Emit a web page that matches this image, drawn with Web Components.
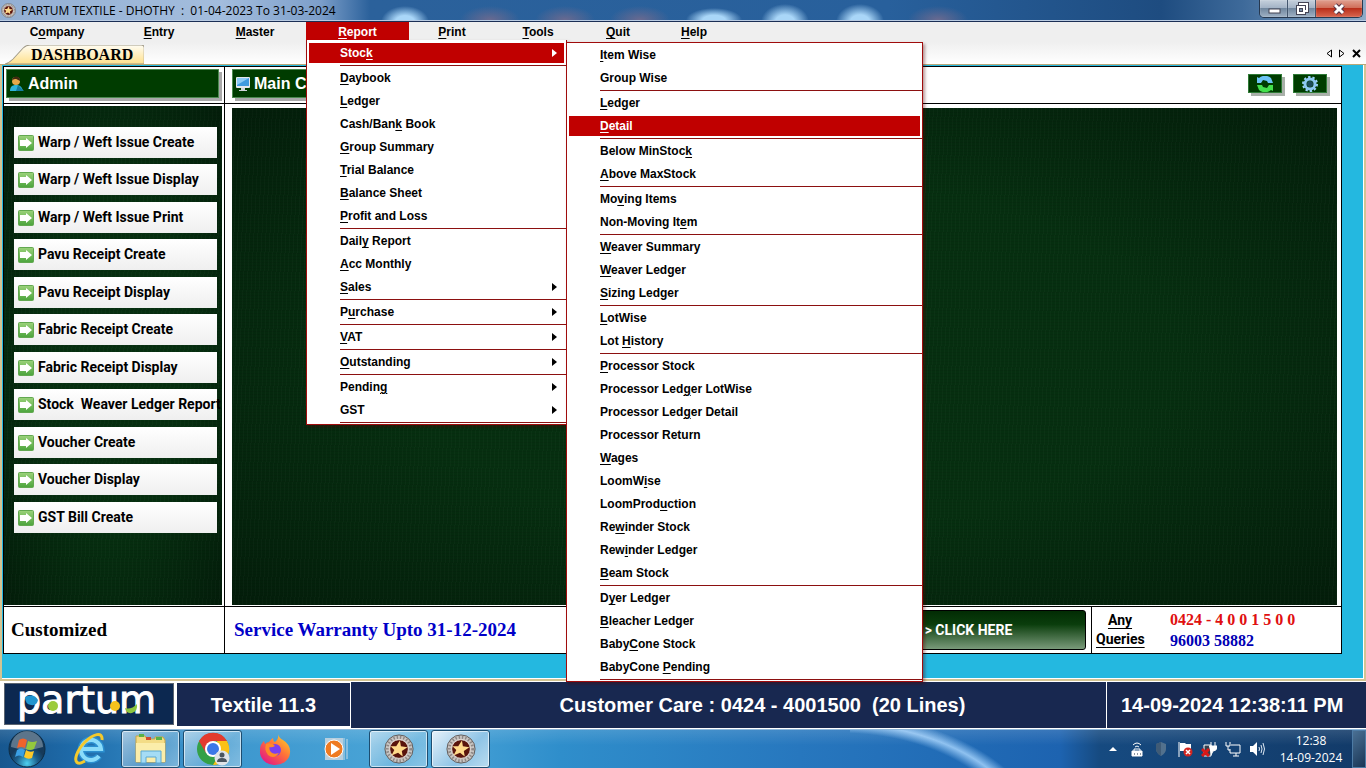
<!DOCTYPE html>
<html lang="en">
<head>
<meta charset="utf-8">
<title>PARTUM TEXTILE - DHOTHY</title>
<style>
body {
  margin: 0;
  min-height: 100vh;
  display: flex;
  flex-direction: column;
  background: #fff;
  color: #000;
  font-family: "Liberation Sans", Arial, sans-serif;
  overflow: hidden;
}
main {
  flex: 1;
  display: flex;
  flex-direction: column;
}
</style>
</head>
<body>
<title-bar>PARTUM TEXTILE - DHOTHY  :  01-04-2023 To 31-03-2024</title-bar>
<menu-bar></menu-bar>
<main>
  <tab-strip>DASHBOARD</tab-strip>
  <dash-board>
    <green-caption slot="user">
      <svg slot="icon" width="16" height="16" viewBox="0 0 16 16"><path d="M1 15c0-4 2-6 6-6s6 2 7 6z" fill="#2fb4d8"/><path d="M9 9l6 6H7z" fill="#157da0"/><circle cx="7" cy="5" r="4" fill="#e8a84a"/><path d="M3 5c0-6 9-6 8 0-2-1-3-2-4-2s-3 0-4 2z" fill="#402a12"/></svg>
      Admin
    </green-caption>
    <side-link slot="links">Warp / Weft Issue Create</side-link>
    <side-link slot="links">Warp / Weft Issue Display</side-link>
    <side-link slot="links">Warp / Weft Issue Print</side-link>
    <side-link slot="links">Pavu Receipt Create</side-link>
    <side-link slot="links">Pavu Receipt Display</side-link>
    <side-link slot="links">Fabric Receipt Create</side-link>
    <side-link slot="links">Fabric Receipt Display</side-link>
    <side-link slot="links">Stock  Weaver Ledger Report</side-link>
    <side-link slot="links">Voucher Create</side-link>
    <side-link slot="links">Voucher Display</side-link>
    <side-link slot="links">GST Bill Create</side-link>
    <green-caption slot="head">
      <svg slot="icon" width="16" height="16" viewBox="0 0 16 16"><rect x="1" y="1" width="14" height="11" rx="1" fill="#e4e8ec"/><rect x="2" y="2" width="12" height="8" fill="#3f9be0"/><path d="M2 2h12L2 9z" fill="#8ccbf5"/><path d="M6 12h4v2h2v1H4v-1h2z" fill="#cfd5da"/></svg>
      Main C
    </green-caption>
    <tool-button slot="tools" label="Refresh">
      <svg width="18" height="16" viewBox="0 0 18 16"><path d="M1 7V1l2 1c3-3 9-3 12 0l2 5h-5l-1-2-4-1-2 3z" fill="#6cc3f5"/><path d="M17 9v6l-2-1c-3 3-9 3-12 0L1 9h5l1 2 4 1 2-3z" fill="#43e04c"/></svg>
    </tool-button>
    <tool-button slot="tools" label="Settings">
      <svg width="18" height="16" viewBox="0 0 18 16"><circle cx="9" cy="8" r="7" fill="none" stroke="#9fd4fa" stroke-width="2" stroke-dasharray="2.4 2"/><circle cx="9" cy="8" r="5" fill="none" stroke="#8cc8f4" stroke-width="3"/><circle cx="9" cy="8" r="3" fill="#1d4d5c"/></svg>
    </tool-button>
  </dash-board>
</main>
<status-bar></status-bar>
<task-bar></task-bar>

<script>
const redMenu = '#c00000';

/**
 * Register a custom element whose shadow root is filled from markup
 * @param {string} name
 * @param {string} html
 * @param {Function} setup
 */
function register(name, html, setup) {
  const template = document.createElement('template');
  template.innerHTML = html;

  customElements.define(name, class extends HTMLElement {
    constructor() {
      super();
      this.attachShadow({ mode: 'open' });
      this.shadowRoot.appendChild(template.content.cloneNode(true));
    }

    connectedCallback() {
      if (setup) {
        setup(this, this.shadowRoot);
      }
    }
  });
}

// '&' stands before the mnemonic letter of a caption
function caption(text) {
  return text.replace(/&(.)/, '<u>$1</u>');
}

const badge = `
<svg viewBox="0 0 32 32">
  <circle cx="16" cy="16" r="15" fill="#c9c5c2" stroke="#5b5452"/>
  <circle cx="16" cy="16" r="12.500" fill="none" stroke="#8d8785" stroke-width="3" stroke-dasharray="1.500 2"/>
  <circle cx="16" cy="16" r="10" fill="#5a140c" stroke="#e9e2dc"/>
  <path d="M17 7l1 6 7 1-6 4 1 6-5-4-7 3 3-6-4-4h6z" fill="#ffd98a"/>
</svg>`;

register('title-bar', `
<style>
:host {
  display: flex;
  height: 21px;
  border-bottom: 1px solid #1b2f55;
  box-shadow: inset 0 -1px #b9cbe2;
  background:
    radial-gradient(ellipse 24px 16px at 405px 22px, #a9d6f8 40%, transparent),
    radial-gradient(ellipse 28px 12px at 714px 20px, #a9d6f8 40%, transparent),
    radial-gradient(ellipse 24px 18px at 785px 22px, #a9d6f8 40%, transparent),
    radial-gradient(ellipse 24px 18px at 860px 22px, #a9d6f8 40%, transparent),
    radial-gradient(ellipse 30px 14px at 490px 20px, #6a6a90, transparent),
    radial-gradient(ellipse 30px 14px at 565px 20px, #6a6a90, transparent),
    radial-gradient(ellipse 30px 14px at 640px 20px, #6a6a90, transparent),
    radial-gradient(ellipse 30px 14px at 938px 20px, #6a6a90, transparent),
    linear-gradient(90deg, #93afd3, #a3bddd 220px, #7d9fca 320px, #2b619b 370px, #28609c 65%, #1e4c80 85%, #3e6a9a 91%, #90abc8);
}
.icon {
  width: 15px;
  height: 15px;
  margin: 3px 5px 0 1px;
}
h1 {
  flex: 1;
  margin: 0;
  font: 12px/21px "Open Sans", "Noto Sans", sans-serif;
  white-space: pre;
}
.buttons {
  display: flex;
  height: 17px;
  margin-right: 3px;
  border: 1px solid #26384f;
  border-top: 0;
  border-radius: 0 0 5px 5px;
  overflow: hidden;
}
button {
  width: 28px;
  padding: 0;
  border: 0;
  border-right: 1px solid #43566e;
  background: linear-gradient(#c5d0dc, #a0b0c4 50%, #71879f 50%, #9fb1c4);
  box-shadow: inset 0 0 1px #fff;
}
.close {
  width: 46px;
  border: 0;
  background: linear-gradient(#e0a090, #cf6a55 50%, #b92f1b 50%, #d8664f);
}
svg { display: block; margin: auto; }
</style>
<div class="icon">${badge}</div>
<h1><slot></slot></h1>
<div class="buttons">
  <button aria-label="Minimize"><svg width="14" height="12"><rect x="2" y="6" width="11" height="4" fill="#fff" stroke="#445"/></svg></button>
  <button aria-label="Restore"><svg width="14" height="13" fill="none"><path d="M5 3V2h7v7h-2M3 5h6v6H3z" stroke="#445" stroke-width="4"/><path d="M5 3V2h7v7h-2M3 5h6v6H3z" stroke="#fff" stroke-width="2"/></svg></button>
  <button class="close" aria-label="Close"><svg width="14" height="12" fill="none"><path d="M3 2l8 8M11 2l-8 8" stroke="#534" stroke-width="5"/><path d="M3 2l8 8M11 2l-8 8" stroke="#fff" stroke-width="3"/></svg></button>
</div>`);

register('drop-menu', `
<style>
:host {
  display: block;
  position: absolute;
  z-index: 10;
  box-sizing: border-box;
  background: #fff;
  border: 1px solid #a00c0c;
  box-shadow: 2px 2px 3px rgba(80, 0, 0, .4);
  padding-top: 1px;
}
ul {
  margin: 0;
  padding: 0;
  list-style: none;
}
li {
  display: flow-root;
  position: relative;
}
ul { display: flow-root; }
.line {
  height: 1px;
  margin: 0 0 1px 33px;
  background: #8c1010;
}
button {
  display: flex;
  align-items: center;
  justify-content: space-between;
  box-sizing: border-box;
  width: calc(100% - 4px);
  height: 20px;
  margin: 1px 2px 2px;
  padding: 0 7px 0 31px;
  border: 0;
  background: none;
  color: #000;
  font: bold 12px/20px "Liberation Sans", Arial, sans-serif;
  text-align: left;
}
button.active {
  background: ${redMenu};
  color: #fff;
}
u { text-underline-offset: 2px; }
drop-menu {
  left: 100%;
  top: 0;
  width: 357px;
}
</style>
<ul></ul>`, (host, root) => {
  const list = root.querySelector('ul');
  for (const item of host.items || []) {
    const li = document.createElement('li');
    if (item === '-') {
      li.className = 'line';
    } else {
      const [text, sub, active] = [].concat(item);
      const arrow = sub ? '<svg width="5" height="8" fill="currentColor"><path d="M0 0l5 4-5 4z"/></svg>' : '';
      li.innerHTML = `<button><span>${caption(text)}</span>${arrow}</button>`;
      li.firstChild.classList.toggle('active', !!active);
      if (Array.isArray(sub)) {
        const menu = document.createElement('drop-menu');
        menu.items = sub;
        li.appendChild(menu);
      }
    }
    list.appendChild(li);
  }
});

const stockItems = [
  '&Item Wise', 'Group Wise', '-',
  '&Ledger', ['&Detail', false, true], '-',
  'Below MinStoc&k', '&Above MaxStock', '-',
  'Mo&ving Items', 'Non-Moving It&em', '-',
  '&Weaver Summary', '&Weaver Ledger', '&Sizing Ledger', '-',
  '&LotWise', 'Lot &History', '-',
  '&Processor Stock', 'Processor Led&ger LotWise', 'Processor Led&ger Detail', 'Processor Return',
  '&Wages', 'LoomW&ise', 'LoomProd&uction', 'Re&winder Stock', 'Rew&inder Ledger', '&Beam Stock', '-',
  'D&yer Ledger', '&Bleacher Ledger', 'Baby&Cone Stock', 'BabyCone &Pending', '-',
];

const reportItems = [
  ['Stoc&k', stockItems, true], '-',
  '&Daybook', '&Ledger', 'Cash/Ban&k Book', '&Group Summary', '&Trial Balance', '&Balance Sheet', '&Profit and Loss', '-',
  'Dail&y Report', '&Acc Monthly', ['&Sales', true], '-',
  ['P&urchase', true], '-',
  ['&VAT', true], '-',
  ['&Outstanding', true], '-',
  ['Pendin&g', true], ['GST', true], '-',
];

// caption and button width of each menu
const menus = [
  ['C&ompany', 114], ['&Entry', 90], ['&Master', 102], ['&Report', 103],
  ['&Print', 86], ['&Tools', 86], ['&Quit', 74], ['&Help', 78],
];

register('menu-bar', `
<style>
:host {
  display: flex;
  height: 20px;
  background: #efefef;
}
div { position: relative; }
button {
  display: block;
  width: 100%;
  height: 18px;
  padding: 1px 0 0;
  border: 0;
  background: none;
  color: #000;
  font: bold 12px/18px "Liberation Sans", Arial, sans-serif;
}
.open {
  background: ${redMenu};
  color: #fff;
}
u { text-underline-offset: 2px; }
drop-menu {
  top: 18px;
  left: 0;
  width: 261px;
  border-top: 0;
  padding-top: 2px;
}
</style>`, (host, root) => {
  for (const [name, width] of menus) {
    const box = document.createElement('div');
    box.style.width = `${width}px`;
    box.innerHTML = `<button>${caption(name)}</button>`;
    if (name === '&Report') {
      box.firstChild.className = 'open';
      const menu = document.createElement('drop-menu');
      menu.items = reportItems;
      box.appendChild(menu);
    }
    root.appendChild(box);
  }
});

register('tab-strip', `
<style>
:host {
  display: flex;
  align-items: flex-end;
  height: 22px;
  background: linear-gradient(#efefef, #fff);
  border-bottom: 1px solid #b9a878;
}
.tab {
  position: relative;
  margin-left: 5px;
  padding: 0 11px 0 26px;
  border: 0;
  background: none;
  font: bold 16px/19px "Liberation Serif", "Times New Roman", serif;
  color: #000;
}
.tab svg {
  position: absolute;
  inset: 0;
  width: 100%;
  height: 100%;
}
.tab span { position: relative; }
nav {
  display: flex;
  gap: 7px;
  margin: 0 5px 6px auto;
}
nav button {
  display: block;
  padding: 0;
  border: 0;
  background: none;
}
nav svg { display: block; }
</style>
<button class="tab" role="tab">
  <svg viewBox="0 0 138 19" preserveAspectRatio="none">
    <defs><linearGradient id="g" x2="0" y2="1"><stop stop-color="#fffdf3"/><stop offset="1" stop-color="#ffe08c"/></linearGradient></defs>
    <path d="M0 19Q4 18 8 14L18 3Q21 0 25 0H135Q138 0 138 3V19z" fill="url(#g)" stroke="#a09a88"/>
  </svg>
  <span><slot></slot></span>
</button>
<nav>
  <button aria-label="Previous tab"><svg width="6" height="9" fill="none" stroke="#000"><path d="M5.500 1v7L1 4.500z"/></svg></button>
  <button aria-label="Next tab"><svg width="6" height="9" fill="none" stroke="#000"><path d="M.500 1v7L5 4.500z"/></svg></button>
  <button aria-label="Close tab"><svg width="9" height="9" fill="none" stroke="#000" stroke-width="2"><path d="M1 1l7 7M8 1L1 8"/></svg></button>
</nav>`);

register('green-caption', `
<style>
:host {
  display: flex;
  align-items: center;
  gap: 3px;
  box-sizing: border-box;
  height: 29px;
  padding-left: 2px;
  background: #003c00;
  border: 1px solid #4c8a50;
  box-shadow: 3px 3px #a9a9a9;
  color: #fff;
  font-size: 16px;
  font-weight: bold;
}
</style>
<slot name="icon"></slot>
<div><slot></slot></div>`);

register('side-link', `
<style>
:host {
  display: block;
  margin-bottom: 6px;
}
:host(:nth-of-type(even)) { margin-bottom: 7px; }
button {
  display: flex;
  align-items: center;
  gap: 4px;
  width: 100%;
  height: 31px;
  padding: 0 0 0 4px;
  border: 0;
  background: linear-gradient(#fff, #efefef);
  color: #000;
  font: bold 14px/33px Roboto, "Liberation Sans", sans-serif;
  white-space: pre;
}
svg { flex: none; }
</style>
<button>
  <svg width="16" height="16" viewBox="0 0 16 16"><defs><linearGradient id="a" x2="0" y2="1"><stop stop-color="#9bd27a"/><stop offset="1" stop-color="#4ba43c"/></linearGradient></defs><rect x=".5" y=".5" width="15" height="15" rx="1" fill="url(#a)" stroke="#62a850"/><path d="M2 5h6V3l6 5-6 5v-2H2z" fill="#fff"/></svg>
  <slot></slot>
</button>`);

register('tool-button', `
<style>
:host { display: block; }
button {
  display: flex;
  align-items: center;
  justify-content: center;
  width: 34px;
  height: 19px;
  padding: 0;
  border: 1px solid #2f7a36;
  background: #003c00;
  box-shadow: 3px 3px #a9b0a9;
}
</style>
<button><slot></slot></button>`, (host, root) => {
  root.querySelector('button').setAttribute('aria-label', host.getAttribute('label'));
});

register('dash-board', `
<style>
:host {
  flex: 1;
  display: flex;
  box-sizing: border-box;
  padding: 1px 22px 25px 1px;
  border: 2px solid #d3c493;
  border-width: 0 2px 2px;
  box-shadow: inset -1px -1px #fff;
  background: #24b8e0;
}
.grid {
  flex: 1;
  display: grid;
  grid-template-columns: 220px 1fr;
  grid-template-rows: 36px 1fr 46px;
  gap: 1px;
  padding: 1px;
  background: #000;
}
.grid > * { background: #fff; }
.user { padding: 2px 5px 0 2px; }
.head {
  display: flex;
  align-items: flex-start;
  padding: 2px 14px 0 7px;
}
.head slot[name=head]::slotted(*) { flex: 0 1 560px; }
.tools {
  display: flex;
  gap: 11px;
  margin: 5px 0 0 auto;
}
.felt {
  background:
    repeating-linear-gradient(93deg, rgba(255, 255, 255, .02) 0 1px, transparent 1px 4px),
    repeating-linear-gradient(0deg, rgba(0, 0, 0, .07) 0 1px, transparent 1px 3px),
    radial-gradient(ellipse at center, #062f10 50%, #031d0a);
}
.side {
  padding: 2px 2px 1px 0;
}
.side .felt {
  box-sizing: border-box;
  height: 100%;
  padding: 21px 5px 0 10px;
}
.stage {
  display: flex;
  padding: 4px 4px 1px 7px;
}
.stage .felt { flex: 1; }
.custom, .warranty {
  font: bold 19px/46px "Liberation Serif", "Times New Roman", serif;
}
.custom { padding-left: 7px; }
.foot { display: flex; }
.warranty {
  padding-left: 9px;
  color: #0000c8;
}
.click {
  width: 235px;
  height: 40px;
  margin: 3px 5px 0 auto;
  border: 1px solid #000;
  border-radius: 3px;
  background: linear-gradient(#022c04, #0a3d0c 35%, #7a9a7a);
  color: #fff;
  font: bold 14px/36px Roboto, "Liberation Sans", sans-serif;
}
.query {
  display: flex;
  align-items: center;
  box-sizing: border-box;
  width: 250px;
  padding-left: 4px;
  border-left: 1px solid #000;
}
.query b {
  width: 48px;
  margin-right: 26px;
  font: bold 14px/19px Roboto, "Liberation Sans", sans-serif;
  text-align: center;
  text-decoration: underline;
  text-underline-offset: 3px;
}
.query p {
  margin: 0;
  font: bold 16px/21px "Liberation Serif", "Times New Roman", serif;
  color: #0000b4;
}
.query .red { color: #e01010; }
</style>
<div class="grid">
  <div class="user"><slot name="user"></slot></div>
  <div class="head"><slot name="head"></slot><div class="tools"><slot name="tools"></slot></div></div>
  <div class="side"><div class="felt"><slot name="links"></slot></div></div>
  <div class="stage"><div class="felt"></div></div>
  <div class="custom">Customized</div>
  <div class="foot">
    <div class="warranty">Service Warranty Upto 31-12-2024</div>
    <button class="click">&gt; CLICK HERE</button>
    <div class="query"><b>Any Queries</b><div><p class="red">0424 - 4 0 0 1 5 0 0</p><p>96003 58882</p></div></div>
  </div>
</div>`);

register('status-bar', `
<style>
:host {
  display: flex;
  height: 47px;
  padding-top: 1px;
  background: #fff;
  color: #fff;
  font-size: 20px;
  font-weight: bold;
}
.logo {
  width: 168px;
  height: 40px;
  margin: 1px 3px 0 4px;
  border: 1px solid #5b6470;
  background: #0c2850;
}
.logo svg {
  display: block;
  overflow: visible;
}
.logo text { font: 38px "DejaVu Sans", sans-serif; }
.name {
  width: 173px;
  height: 43px;
  margin: 1px 2px 0 0;
  background: #182850;
  line-height: 45px;
  text-align: center;
}
.care, .clock {
  height: 46px;
  background: #182850;
  line-height: 47px;
  white-space: pre;
}
.care {
  flex: 1;
  box-sizing: border-box;
  padding-left: 68px;
  text-align: center;
  margin-left: -1px;
}
.clock {
  width: 245px;
  padding-left: 14px;
  border-left: 1px solid #fff;
  box-sizing: content-box;
}
</style>
<div class="logo">
  <svg width="168" height="40">
    <text x="12" y="29" fill="#fff" stroke="#fff">partum</text>
    <path d="M20 13q9-4 13 3-1 6-7 5-6-1-6-8z" fill="#2095cf"/>
    <circle cx="48" cy="22" r="5" fill="#9ccb3b"/>
    <circle cx="110" cy="22" r="5" fill="#f6c21c"/>
    <path d="M120 24q6 2 12-4 1 7-5 9-6 1-7-5z" fill="#8cc63f"/>
  </svg>
</div>
<div class="name">Textile 11.3</div>
<div class="care">Customer Care : 0424 - 4001500  (20 Lines)</div>
<div class="clock">14-09-2024 12:38:11 PM</div>`);

register('task-bar', `
<style>
:host {
  display: flex;
  height: 38px;
  border-top: 1px solid #8fb8da;
  background:
    linear-gradient(rgba(255, 255, 255, .12), transparent 40%),
    radial-gradient(ellipse 200px 130px at -10px 120px, transparent 90%, rgba(170, 215, 255, .8) 97%, transparent 104%) 850px 0 / 160px 38px no-repeat,
    linear-gradient(90deg, #17578f, #1f6cab 80px, #3b95cd 200px, #4ba6d8 420px, #2f8ecb 560px, #2777be 800px, #1d63b0 1060px, #164a80 1100px, #123a68);
}
button {
  flex: none;
  display: flex;
  align-items: center;
  justify-content: center;
  box-sizing: border-box;
  width: 59px;
  height: 38px;
  margin-right: 3px;
  padding: 0;
  border: 1px solid transparent;
  border-radius: 3px;
  background: none;
}
.run {
  border-color: #1d4d70;
  box-shadow: inset 0 0 0 1px rgba(255, 255, 255, .6);
  background: linear-gradient(135deg, rgba(255, 255, 255, .55), rgba(255, 255, 255, .2) 60%, rgba(255, 255, 255, .35));
}
.top { background: linear-gradient(135deg, #e6f2fa, #8fc4e6 60%, #b9dcf0); }
.start { margin: 0 3px 0 -3px; }
.badge svg {
  width: 30px;
  height: 30px;
}
.tray {
  display: flex;
  align-items: center;
  gap: 8px;
  margin: 0 3px 0 auto;
  color: #fff;
}
time {
  width: 76px;
  font: 12px/17px "Open Sans", "Noto Sans", sans-serif;
  text-align: center;
}
.desk {
  width: 14px;
  margin: 0;
  border: 1px solid #4d7ba5;
  border-radius: 0;
  background: linear-gradient(135deg, #4a7094, #1a3656);
}
</style>
<button class="start" aria-label="Start"><svg width="38" height="38" viewBox="0 0 38 38">
  <defs><radialGradient id="o" cy=".9"><stop stop-color="#4fd0f0"/><stop offset=".6" stop-color="#1c5f8c"/><stop offset="1" stop-color="#163a5a"/></radialGradient></defs>
  <circle cx="19" cy="19" r="18" fill="url(#o)" stroke="#0d2c44"/><path d="M3 17a16 16 0 0 1 32 0q-16 5-32 0z" fill="#fff" opacity=".3"/>
  <path d="M11 10q4-3 8 0l-2 8q-4-2-8 0z" fill="#f0642c"/><path d="M20 11q4 2 9 0l-3 8q-4 2-8 0z" fill="#93c83e"/>
  <path d="M9 20q4-3 8 0l-2 7q-4-3-8 0z" fill="#3ba0e4"/><path d="M18 20q4 3 8 1l-2 7q-4 2-8-1z" fill="#ffc928"/></svg></button>
<button aria-label="Internet Explorer"><svg width="34" height="34" viewBox="0 0 34 34" fill="none">
  <path d="M27 24a10 10 0 1 1 2-7H10" stroke="#2b8fd0" stroke-width="7"/><path d="M27 24a10 10 0 1 1 2-7H10" stroke="#8adcfa" stroke-width="4"/>
  <path d="M30 8c1-9-9-6-17 2C5 18 1 29 6 31c2 1 5-1 7-2" stroke="#f4c92c" stroke-width="3"/></svg></button>
<button class="run" aria-label="Explorer"><svg width="34" height="32" viewBox="0 0 34 32">
  <path d="M2 8V3h9l2 3h8V4h8l2 3v22H2z" fill="#f3dc86" stroke="#c9a544"/><path d="M5 1h5v3H5zM22 4h6v3h-6z" fill="#58b247"/><path d="M12 4h5v3h-5z" fill="#cf4a30"/>
  <path d="M2 10h29v19H2z" fill="#fbedaa"/><path d="M7 30V18h20v12h-5v-6h-10v6z" fill="#a5dcf5" stroke="#5aa8d2"/></svg></button>
<button class="run" aria-label="Chrome"><svg width="34" height="34" viewBox="0 0 34 34">
  <circle cx="17" cy="17" r="16" fill="#34a047"/><path d="M31 9a16 16 0 0 1-14 24l7-12-3-12z" fill="#fbc116"/><path d="M3 9A16 16 0 0 1 31 9H17l-7 12z" fill="#e33b2e"/>
  <circle cx="17" cy="17" r="8" fill="#fff"/><circle cx="17" cy="17" r="6" fill="#3b78e7"/><circle cx="26" cy="26" r="7.500" fill="#dfe3e8"/><circle cx="26" cy="23" r="2.500" fill="#4a5560"/><path d="M21 30q0-4 5-4t5 4z" fill="#4a5560"/></svg></button>
<button aria-label="Firefox"><svg width="34" height="34" viewBox="0 0 34 34">
  <defs><linearGradient id="f" x1="1" x2=".2" y2="1"><stop stop-color="#ffe226"/><stop offset=".5" stop-color="#ff7139"/><stop offset="1" stop-color="#e31587"/></linearGradient></defs>
  <path d="M20 2q1 4 5 6 8 5 7 13a15 13 0 0 1-30-2c0-5 1-7 4-10l1 3q2-2 4-2 2-3 4-4 0 3 2 4 4-3 3-8z" fill="url(#f)"/>
  <circle cx="17" cy="18" r="6" fill="#7a3ff0"/><path d="M8 12q6-2 9 2-3 2-6 1 1 9 10 6-5 7-11 2-4-5-2-11z" fill="#ff8a28"/></svg></button>
<button aria-label="Media Player"><svg width="28" height="28" viewBox="0 0 28 28">
  <path d="M2 3h18v22H2z" fill="#b8cfde"/><path d="M21 3v22M24 4v20" stroke="#c7dbe8"/><circle cx="11" cy="14" r="9" fill="#ef7b22" stroke="#fff"/><path d="M8 8l9 6-9 6z" fill="#fff"/></svg></button>
<button class="run badge" aria-label="Partum">${badge}</button>
<button class="run top badge" aria-label="Partum Textile">${badge}</button>
<div class="tray">
  <svg width="16" height="16"><path d="M4 10l4-4 4 4z" fill="#fff"/></svg>
  <svg width="16" height="16" fill="none" stroke="#fff"><path d="M4 4q4-4 8 0M6 6q2-2 4 0M5 10V8h6v2"/><path d="M3 10h10v5H3z" fill="#fff"/><path d="M5 13h1m2 0h1m2 0h1" stroke="#234"/></svg>
  <svg width="16" height="16"><path d="M8 1l5 2v5q0 4-5 7-5-3-5-7V3z" fill="#52718d"/><path d="M8 1v14q-5-3-5-7V3z" fill="#3f5b76"/></svg>
  <svg width="16" height="16"><path d="M2 1v15" stroke="#fff" stroke-width="1"/><path d="M3 2h5l1 1h5v7H3z" fill="#fff"/><circle cx="11" cy="11" r="4.500" fill="#d32620"/><path d="M9 9l4 4m0-4l-4 4" stroke="#fff" stroke-width="1.500"/></svg>
  <svg width="16" height="16"><path d="M3 4h7v11H3z" fill="#33404e" stroke="#fff"/><path d="M10 1v4m4-4v4M8 5h8v2q-1 3-4 3l-2 4" fill="#fff" stroke="#fff"/><path d="M1 8l7 7m0-7l-7 7" stroke="#d81818" stroke-width="3"/></svg>
  <svg width="16" height="16" fill="none" stroke="#fff"><path d="M6 4h9v8H5V8M8 15h6m-3-3v3M1 1v4h4V1M3 5v4h2"/></svg>
  <svg width="16" height="16"><path d="M1 5h3l4-4v14l-4-4H1z" fill="#fff"/><path d="M10 6q1 2 0 4m2-6q2 4 0 8m2-10q3 6 0 12" fill="none" stroke="#dfe9f4"/></svg>
  <time>12:38<br>14-09-2024</time>
</div>
<button class="desk" aria-label="Show desktop"></button>`);
</script>
</body>
</html>
